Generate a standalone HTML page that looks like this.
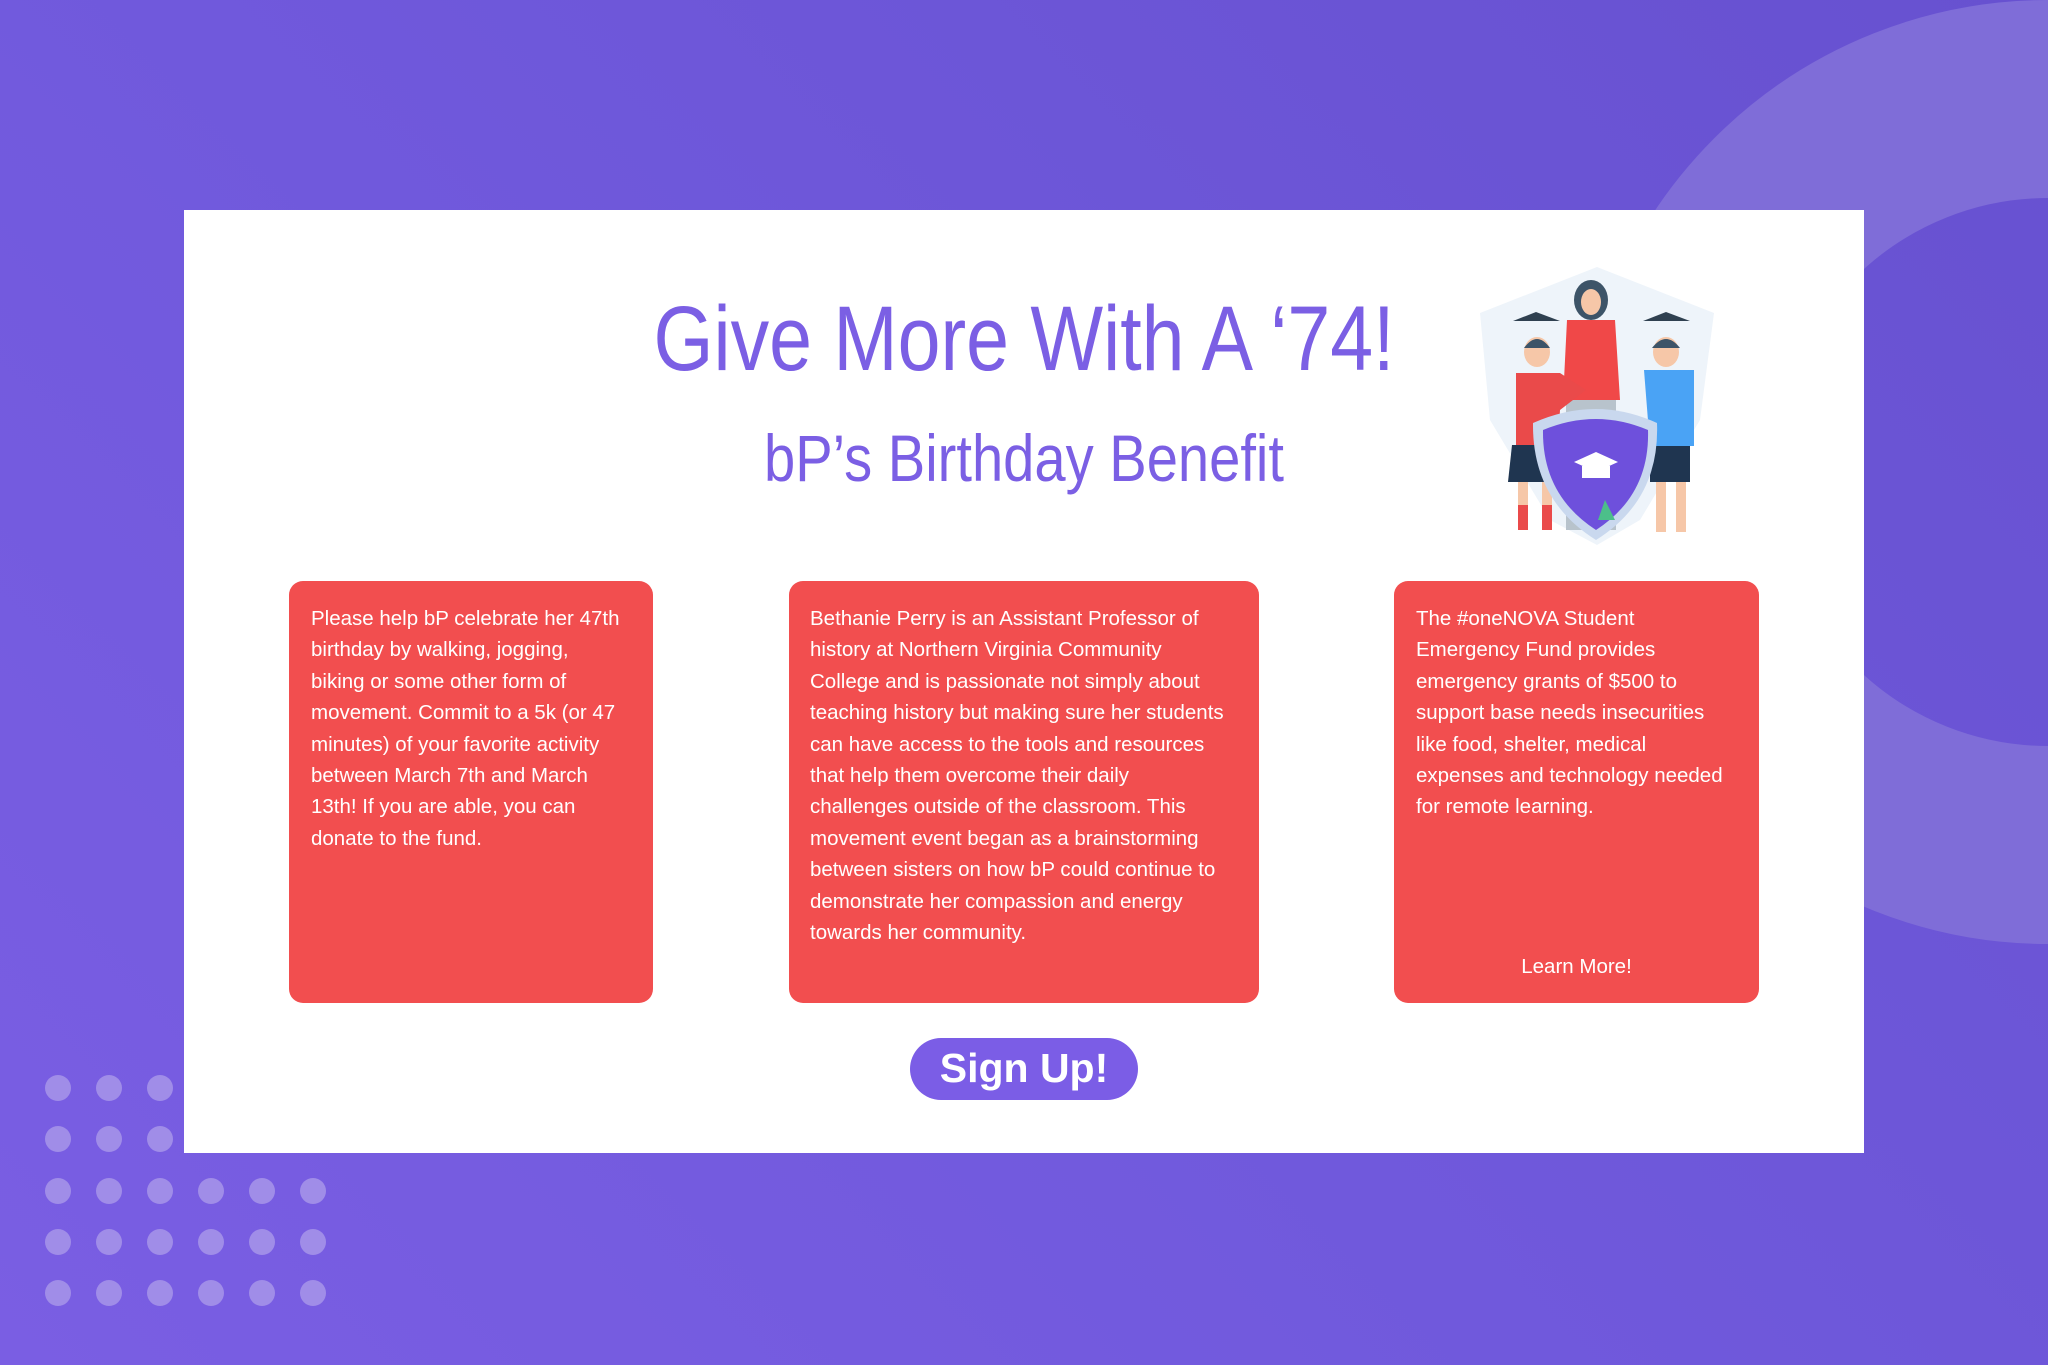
<!DOCTYPE html>
<html><head><meta charset="utf-8"><style>
html,body{margin:0;padding:0}
body{width:2048px;height:1365px;position:relative;overflow:hidden;background:linear-gradient(45deg,#7a5ee3 0%,#7059dc 45%,#6751d0 100%);font-family:"Liberation Sans",sans-serif}
.abs{position:absolute}
.card{position:absolute;left:184px;top:210px;width:1680px;height:943px;background:#fff}
.box{position:absolute;top:581px;height:422px;background:#f24e4f;border-radius:14px;color:#fff;font-size:20.5px}
.box .t{position:absolute;top:22px;white-space:nowrap;line-height:31.4px}
.dot{position:absolute;width:26px;height:26px;border-radius:50%;background:#a08de8}
.btn{position:absolute;left:910px;top:1038px;width:228px;height:62px;border-radius:31px;background:#7b5de6;color:#fff;font-weight:bold;font-size:41px;text-align:center;line-height:60px}
</style></head><body>
<svg class="abs" style="left:0;top:0" width="2048" height="1365">
<circle cx="2048" cy="472" r="373" fill="none" stroke="#7f6dd8" stroke-width="198"/>
</svg>
<div class="card"></div>
<svg class="abs" style="left:0;top:0" width="2048" height="1365">
<text x="1024" y="370" text-anchor="middle" textLength="741" lengthAdjust="spacingAndGlyphs" font-family="Liberation Sans" font-size="92" fill="#7b5fe4">Give More With A ‘74!</text>
<text x="1024" y="481" text-anchor="middle" textLength="520" lengthAdjust="spacingAndGlyphs" font-family="Liberation Sans" font-size="66" fill="#7b5fe4">bP’s Birthday Benefit</text>
<polygon points="1597,267 1714,313 1700,420 1640,520 1597,545 1550,520 1490,420 1480,313" fill="#eef4fa"/>
<ellipse cx="1591" cy="300" rx="17" ry="20" fill="#3d5468"/>
<ellipse cx="1591" cy="302" rx="10" ry="13" fill="#f6c7a8"/>
<path d="M1567 320 L1615 320 L1620 400 L1563 400 Z" fill="#f04848"/>
<rect x="1566" y="400" width="50" height="130" fill="#b8c3cc"/>
<polygon points="1513,321 1560,321 1536,312" fill="#2f4050"/>
<ellipse cx="1537" cy="352" rx="13" ry="15" fill="#f6c7a8"/>
<path d="M1524 348 Q1537 330 1550 348 Z" fill="#3d5468"/>
<path d="M1516 373 L1560 373 L1586 390 L1560 410 L1558 445 L1516 445 Z" fill="#ea4a4a"/>
<path d="M1512 445 L1560 445 L1564 482 L1508 482 Z" fill="#1f3550"/>
<rect x="1518" y="482" width="10" height="48" fill="#f6c7a8"/><rect x="1542" y="482" width="10" height="48" fill="#f6c7a8"/>
<rect x="1518" y="505" width="10" height="25" fill="#ea4a4a"/><rect x="1542" y="505" width="10" height="25" fill="#ea4a4a"/>
<polygon points="1643,321 1690,321 1666,312" fill="#2f4050"/>
<ellipse cx="1666" cy="352" rx="13" ry="15" fill="#f6c7a8"/>
<path d="M1652 348 Q1666 330 1680 348 Z" fill="#3d5468"/>
<path d="M1644 370 L1694 370 L1694 446 L1650 446 Z" fill="#4aa3f5"/>
<rect x="1650" y="446" width="40" height="36" fill="#1f3550"/>
<rect x="1656" y="482" width="10" height="50" fill="#f6c7a8"/><rect x="1676" y="482" width="10" height="50" fill="#f6c7a8"/>
<path d="M1533 423 Q1596 395 1657 423 Q1660 500 1596 540 Q1532 500 1533 423 Z" fill="#c9d8ee"/>
<path d="M1543 430 Q1596 408 1648 430 Q1650 495 1596 530 Q1542 495 1543 430 Z" fill="#6e50dc"/>
<polygon points="1574,462 1596,452 1618,462 1596,472" fill="#fff"/>
<rect x="1582" y="466" width="28" height="12" fill="#fff"/>
<path d="M1598 520 L1605 500 L1615 520 Z" fill="#4cbf8a"/>
</svg>
<div class="box" style="left:289px;width:364px"><div class="t" style="left:22px">Please help bP celebrate her 47th<br>birthday by walking, jogging,<br>biking or some other form of<br>movement. Commit to a 5k (or 47<br>minutes) of your favorite activity<br>between March 7th and March<br>13th! If you are able, you can<br>donate to the fund.</div></div>
<div class="box" style="left:789px;width:470px"><div class="t" style="left:21px">Bethanie Perry is an Assistant Professor of<br>history at Northern Virginia Community<br>College and is passionate not simply about<br>teaching history but making sure her students<br>can have access to the tools and resources<br>that help them overcome their daily<br>challenges outside of the classroom. This<br>movement event began as a brainstorming<br>between sisters on how bP could continue to<br>demonstrate her compassion and energy<br>towards her community.</div></div>
<div class="box" style="left:1394px;width:365px"><div class="t" style="left:22px">The #oneNOVA Student<br>Emergency Fund provides<br>emergency grants of $500 to<br>support base needs insecurities<br>like food, shelter, medical<br>expenses and technology needed<br>for remote learning.</div><div class="t" style="left:0;width:365px;text-align:center;top:370px">Learn More!</div></div>
<div class="btn">Sign Up!</div>
<div class="dot" style="left:45px;top:1075px"></div><div class="dot" style="left:96px;top:1075px"></div><div class="dot" style="left:147px;top:1075px"></div>
<div class="dot" style="left:45px;top:1126px"></div><div class="dot" style="left:96px;top:1126px"></div><div class="dot" style="left:147px;top:1126px"></div>
<div class="dot" style="left:45px;top:1178px"></div><div class="dot" style="left:96px;top:1178px"></div><div class="dot" style="left:147px;top:1178px"></div><div class="dot" style="left:198px;top:1178px"></div><div class="dot" style="left:249px;top:1178px"></div><div class="dot" style="left:300px;top:1178px"></div>
<div class="dot" style="left:45px;top:1229px"></div><div class="dot" style="left:96px;top:1229px"></div><div class="dot" style="left:147px;top:1229px"></div><div class="dot" style="left:198px;top:1229px"></div><div class="dot" style="left:249px;top:1229px"></div><div class="dot" style="left:300px;top:1229px"></div>
<div class="dot" style="left:45px;top:1280px"></div><div class="dot" style="left:96px;top:1280px"></div><div class="dot" style="left:147px;top:1280px"></div><div class="dot" style="left:198px;top:1280px"></div><div class="dot" style="left:249px;top:1280px"></div><div class="dot" style="left:300px;top:1280px"></div>
</body></html>
